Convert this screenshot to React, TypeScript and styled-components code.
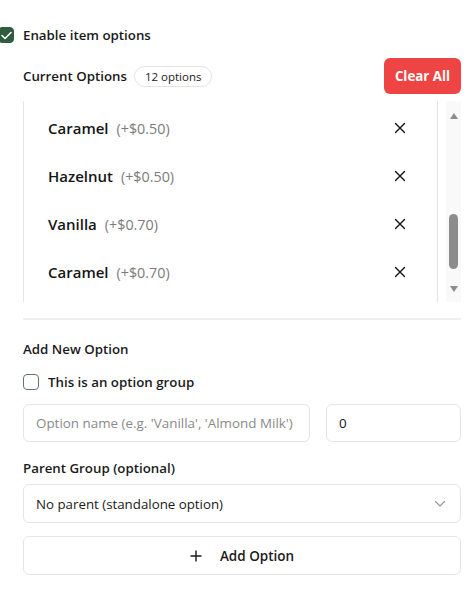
import React, { useEffect, useRef, useState } from "react";
import styled, { createGlobalStyle } from "styled-components";

const Global = createGlobalStyle`
  html, body { margin: 0; padding: 0; background: #ffffff; }
  body { font-family: "Open Sans", "Noto Sans", sans-serif; color: #111; }
  * { box-sizing: border-box; }
`;

const Page = styled.div`
  width: 467px;
  padding: 25px 6px 0 23px;
  display: flex;
  flex-direction: column;
`;

const CheckRow = styled.label<{ $pull?: boolean }>`
  display: flex;
  align-items: center;
  gap: 9px;
  height: 20px;
  margin-left: ${(p) => (p.$pull ? "-25px" : "0")};
  font-size: 13.3px;
  font-weight: 600;
  color: #1a1a1a;
`;

const Box = styled.span<{ $checked?: boolean }>`
  width: 16px;
  height: 16px;
  border-radius: 4px;
  flex: none;
  display: flex;
  align-items: center;
  justify-content: center;
  background: ${(p) => (p.$checked ? "#2e5e3e" : "#fff")};
  border: 1.5px solid ${(p) => (p.$checked ? "#2e5e3e" : "#5b7a66")};
`;

const HeaderRow = styled.div`
  display: flex;
  align-items: center;
  margin-top: 13px;
  height: 36px;
`;

const SectionTitle = styled.div`
  font-size: 13.3px;
  font-weight: 600;
  color: #1a1a1a;
`;

const Badge = styled.span`
  margin-left: 7px;
  height: 21px;
  padding: 0 10px;
  display: inline-flex;
  align-items: center;
  border: 1px solid #e4e4e4;
  border-radius: 11px;
  font-size: 11.5px;
  font-weight: 500;
  color: #222;
`;

const ClearButton = styled.button`
  margin-left: auto;
  height: 36px;
  width: 77px;
  border: none;
  border-radius: 6px;
  background: #ef4444;
  color: #fff;
  font-family: inherit;
  font-size: 13.3px;
  font-weight: 700;
`;

const ListArea = styled.div`
  margin-top: 7px;
  height: 201px;
  display: flex;
`;

const Scroller = styled.div`
  flex: 1;
  height: 100%;
  overflow-y: auto;
  scrollbar-width: none;
  &::-webkit-scrollbar { display: none; }
`;

const Rail = styled.div`
  width: 15px;
  flex: none;
  background: #f9f9f9;
  padding: 8px 0 6px;
  display: flex;
  flex-direction: column;
  align-items: center;
`;

const Arrow = styled.div<{ $down?: boolean }>`
  height: 14px;
  width: 15px;
  flex: none;
  display: flex;
  align-items: center;
  justify-content: center;
  &::before {
    content: "";
    width: 0;
    height: 0;
    border-left: 4.5px solid transparent;
    border-right: 4.5px solid transparent;
    ${(p) => (p.$down ? "border-top: 6px solid #8c8c8c;" : "border-bottom: 6px solid #8c8c8c;")}
  }
`;

const Track = styled.div`
  flex: 1;
  width: 100%;
  display: flex;
  flex-direction: column;
  align-items: center;
`;

const Thumb = styled.div`
  width: 9px;
  height: 55px;
  flex: none;
  border-radius: 5px;
  background: #8c8c8c;
`;

const ListBox = styled.div`
  margin-right: 8px;
  border: 1px solid #e5e5e5;
  border-radius: 8px;
  padding: 12px 0;
`;

const OptionRow = styled.div`
  height: 48px;
  display: flex;
  align-items: center;
  padding: 0 25px 0 24px;
`;

const OptionName = styled.span`
  font-size: 15px;
  font-weight: 600;
  color: #151515;
`;

const OptionPrice = styled.span`
  margin-left: 8px;
  font-size: 14.3px;
  color: #7b7b7b;
`;

const RemoveButton = styled.button`
  margin-left: auto;
  width: 24px;
  height: 24px;
  border: none;
  background: transparent;
  padding: 0;
  display: flex;
  align-items: center;
  justify-content: center;
  color: #111;
`;

const Divider = styled.div`
  margin-top: 16px;
  height: 2px;
  background: #efefef;
`;

const AddTitle = styled(SectionTitle)`
  margin-top: 19px;
  line-height: 20px;
`;

const GroupRow = styled(CheckRow)`
  margin-top: 13px;
`;

const InputsRow = styled.div`
  margin-top: 12px;
  display: grid;
  grid-template-columns: 287px 135px;
  justify-content: space-between;
`;

const TextInput = styled.input`
  height: 38px;
  width: 100%;
  border: 1px solid #e5e5e5;
  border-radius: 6px;
  padding: 0 12px;
  font-family: inherit;
  font-size: 13.4px;
  color: #111;
  outline: none;
  &::placeholder { color: #8a8a8a; }
`;

const FieldLabel = styled(SectionTitle)`
  margin-top: 16px;
  line-height: 20px;
`;

const SelectBox = styled.div`
  margin-top: 6px;
  height: 39px;
  border: 1px solid #e5e5e5;
  border-radius: 6px;
  padding: 0 14px 0 12px;
  display: flex;
  align-items: center;
  justify-content: space-between;
  font-size: 13.3px;
  color: #1a1a1a;
`;

const AddButton = styled.button`
  margin-top: 13px;
  height: 39px;
  width: 100%;
  border: 1px solid #e5e5e5;
  border-radius: 6px;
  background: #fff;
  display: flex;
  align-items: center;
  justify-content: center;
  gap: 18px;
  font-family: inherit;
  font-size: 13.5px;
  font-weight: 600;
  color: #1a1a1a;
`;

const options = [
  { name: "Whole Milk", price: "0.00" },
  { name: "Oat Milk", price: "0.60" },
  { name: "Almond Milk", price: "0.60" },
  { name: "Soy Milk", price: "0.50" },
  { name: "Extra Shot", price: "0.80" },
  { name: "Decaf", price: "0.00" },
  { name: "Vanilla", price: "0.50" },
  { name: "Caramel", price: "0.50" },
  { name: "Hazelnut", price: "0.50" },
  { name: "Vanilla", price: "0.70" },
  { name: "Caramel", price: "0.70" },
  { name: "Hazelnut", price: "0.70" },
];

const XIcon = () => (
  <svg width="12" height="12" viewBox="0 0 12 12">
    <path d="M1.5 1.5 L10.5 10.5 M10.5 1.5 L1.5 10.5" stroke="#111" strokeWidth="1.4" strokeLinecap="round" />
  </svg>
);

const TRACK = 160;
const THUMB = 55;

export default function App() {
  const ref = useRef<HTMLDivElement>(null);
  const [ratio, setRatio] = useState(0);
  const update = () => {
    const el = ref.current;
    if (!el) return;
    const max = el.scrollHeight - el.clientHeight;
    setRatio(max > 0 ? el.scrollTop / max : 0);
  };
  useEffect(() => {
    if (ref.current) ref.current.scrollTop = 346;
    update();
  }, []);
  return (
    <>
      <Global />
      <Page>
        <CheckRow $pull>
          <Box $checked>
            <svg width="11" height="9" viewBox="0 0 11 9">
              <path d="M1 4.5 L4 7.5 L10 1.5" fill="none" stroke="#fff" strokeWidth="1.6" strokeLinecap="round" strokeLinejoin="round" />
            </svg>
          </Box>
          Enable item options
        </CheckRow>
        <HeaderRow>
          <SectionTitle>Current Options</SectionTitle>
          <Badge>12 options</Badge>
          <ClearButton>Clear All</ClearButton>
        </HeaderRow>
        <ListArea>
          <Scroller ref={ref} onScroll={update}>
            <ListBox>
              {options.map((o, i) => (
                <OptionRow key={i}>
                  <OptionName>{o.name}</OptionName>
                  <OptionPrice>(+${o.price})</OptionPrice>
                  <RemoveButton aria-label="Remove">
                    <XIcon />
                  </RemoveButton>
                </OptionRow>
              ))}
            </ListBox>
          </Scroller>
          <Rail>
            <Arrow />
            <Track>
              <Thumb style={{ marginTop: Math.round(ratio * (TRACK - THUMB)) }} />
            </Track>
            <Arrow $down />
          </Rail>
        </ListArea>
        <Divider />
        <AddTitle>Add New Option</AddTitle>
        <GroupRow>
          <Box />
          This is an option group
        </GroupRow>
        <InputsRow>
          <TextInput placeholder="Option name (e.g. 'Vanilla', 'Almond Milk')" />
          <TextInput defaultValue="0" />
        </InputsRow>
        <FieldLabel>Parent Group (optional)</FieldLabel>
        <SelectBox>
          <span>No parent (standalone option)</span>
          <svg width="12" height="8" viewBox="0 0 12 8">
            <path d="M1.5 1.5 L6 6 L10.5 1.5" fill="none" stroke="#9a9a9a" strokeWidth="1.2" strokeLinecap="round" strokeLinejoin="round" />
          </svg>
        </SelectBox>
        <AddButton>
          <svg width="12" height="12" viewBox="0 0 12 12">
            <path d="M6 0.5 V11.5 M0.5 6 H11.5" stroke="#1a1a1a" strokeWidth="1.4" />
          </svg>
          Add Option
        </AddButton>
      </Page>
    </>
  );
}
